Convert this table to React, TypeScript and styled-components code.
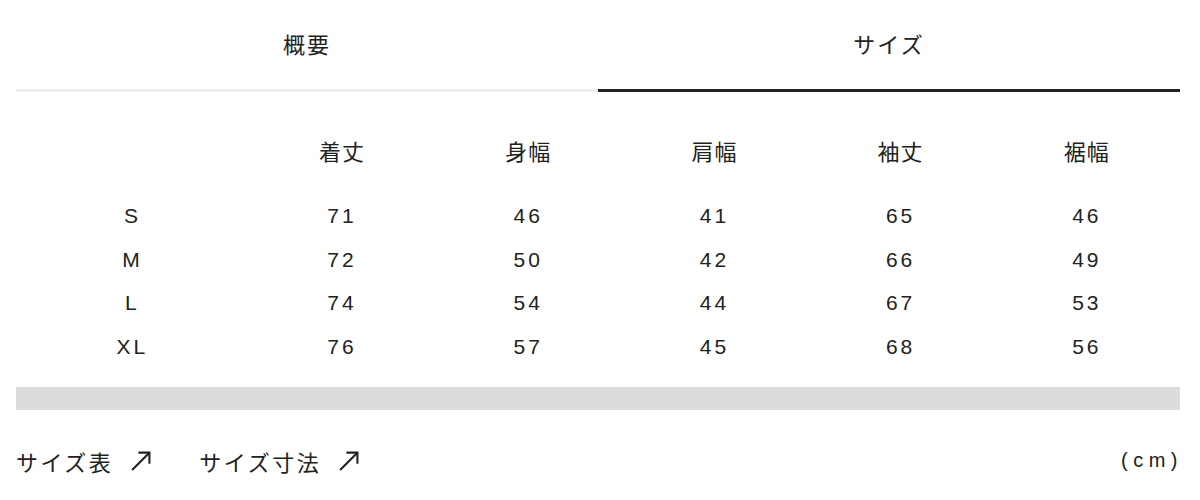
import React from 'react';
import styled, {createGlobalStyle} from "styled-components";

const columns = ["着丈", "身幅", "肩幅", "袖丈", "裾幅"]

const rows = [
    {size: "S", values: [71, 46, 41, 65, 46]},
    {size: "M", values: [72, 50, 42, 66, 49]},
    {size: "L", values: [74, 54, 44, 67, 53]},
    {size: "XL", values: [76, 57, 45, 68, 56]},
]

const links = ["サイズ表", "サイズ寸法"]

const ArrowIcon = () => (
    <svg width="21" height="21" viewBox="0 0 20 20" fill="none" stroke="#222" strokeWidth="2">
        <path d="M2 19 L18 3"/>
        <path d="M8 2.5 H18.5 V13"/>
    </svg>
)

export default function App() {
    return (
        <>
            <GlobalStyle/>
            <Page>
                <Tabs>
                    <Tab active={false}>概要</Tab>
                    <Tab active={true}>サイズ</Tab>
                </Tabs>
                <SizeTable>
                    <thead>
                    <tr>
                        <HeadCell/>
                        {columns.map((c) => <HeadCell key={c}>{c}</HeadCell>)}
                    </tr>
                    </thead>
                    <tbody>
                    {rows.map((row) => (
                        <tr key={row.size}>
                            <Cell>{row.size}</Cell>
                            {row.values.map((v, i) => <Cell key={i}>{v}</Cell>)}
                        </tr>
                    ))}
                    </tbody>
                </SizeTable>
                <ScrollBar/>
                <Footer>
                    <LinkList>
                        {links.map((l) => (
                            <LinkItem key={l} href="#">
                                <span>{l}</span>
                                <ArrowIcon/>
                            </LinkItem>
                        ))}
                    </LinkList>
                    <Unit>(cm)</Unit>
                </Footer>
            </Page>
        </>
    );
};

const GlobalStyle = createGlobalStyle`
    body {
        margin: 0;
        background: #fff;
        color: #222;
        font-family: "Liberation Sans", "Noto Sans CJK JP", sans-serif;
    }
`

const Page = styled.div`
    width: 1164px;
    padding: 0 20px 0 16px;
`

const Tabs = styled.div`
    display: grid;
    grid-template-columns: 1fr 1fr;
`

const Tab = styled.div<{active: boolean}>`
    height: 92px;
    box-sizing: border-box;
    padding-top: 32px;
    text-align: center;
    font-size: 22px;
    letter-spacing: 2px;
    line-height: 28px;
    border-bottom: 3px solid ${props => props.active ? "#222" : "#eee"};
`

const SizeTable = styled.table`
    width: 100%;
    border-collapse: collapse;
    table-layout: fixed;
    margin-top: 41px;

    th:first-child, td:first-child {
        width: 20%;
    }
`

const HeadCell = styled.th`
    font-weight: normal;
    font-size: 22px;
    letter-spacing: 1px;
    height: 34px;
    padding: 0 0 27px;
    text-align: center;
`

const Cell = styled.td`
    font-size: 21px;
    letter-spacing: 3px;
    height: 43.7px;
    padding: 0;
    text-align: center;
`

const ScrollBar = styled.div`
    height: 23px;
    margin-top: 18px;
    background: #dcdcdc;
`

const Footer = styled.div`
    display: flex;
    justify-content: space-between;
    align-items: center;
    margin-top: 35px;
`

const LinkList = styled.div`
    display: flex;
    gap: 48px;
`

const LinkItem = styled.a`
    display: flex;
    align-items: center;
    gap: 17px;
    color: #222;
    text-decoration: none;
    font-size: 22px;
    letter-spacing: 2.5px;
`

const Unit = styled.div`
    font-size: 20px;
    letter-spacing: 5.5px;
    margin-right: -3px;
`
